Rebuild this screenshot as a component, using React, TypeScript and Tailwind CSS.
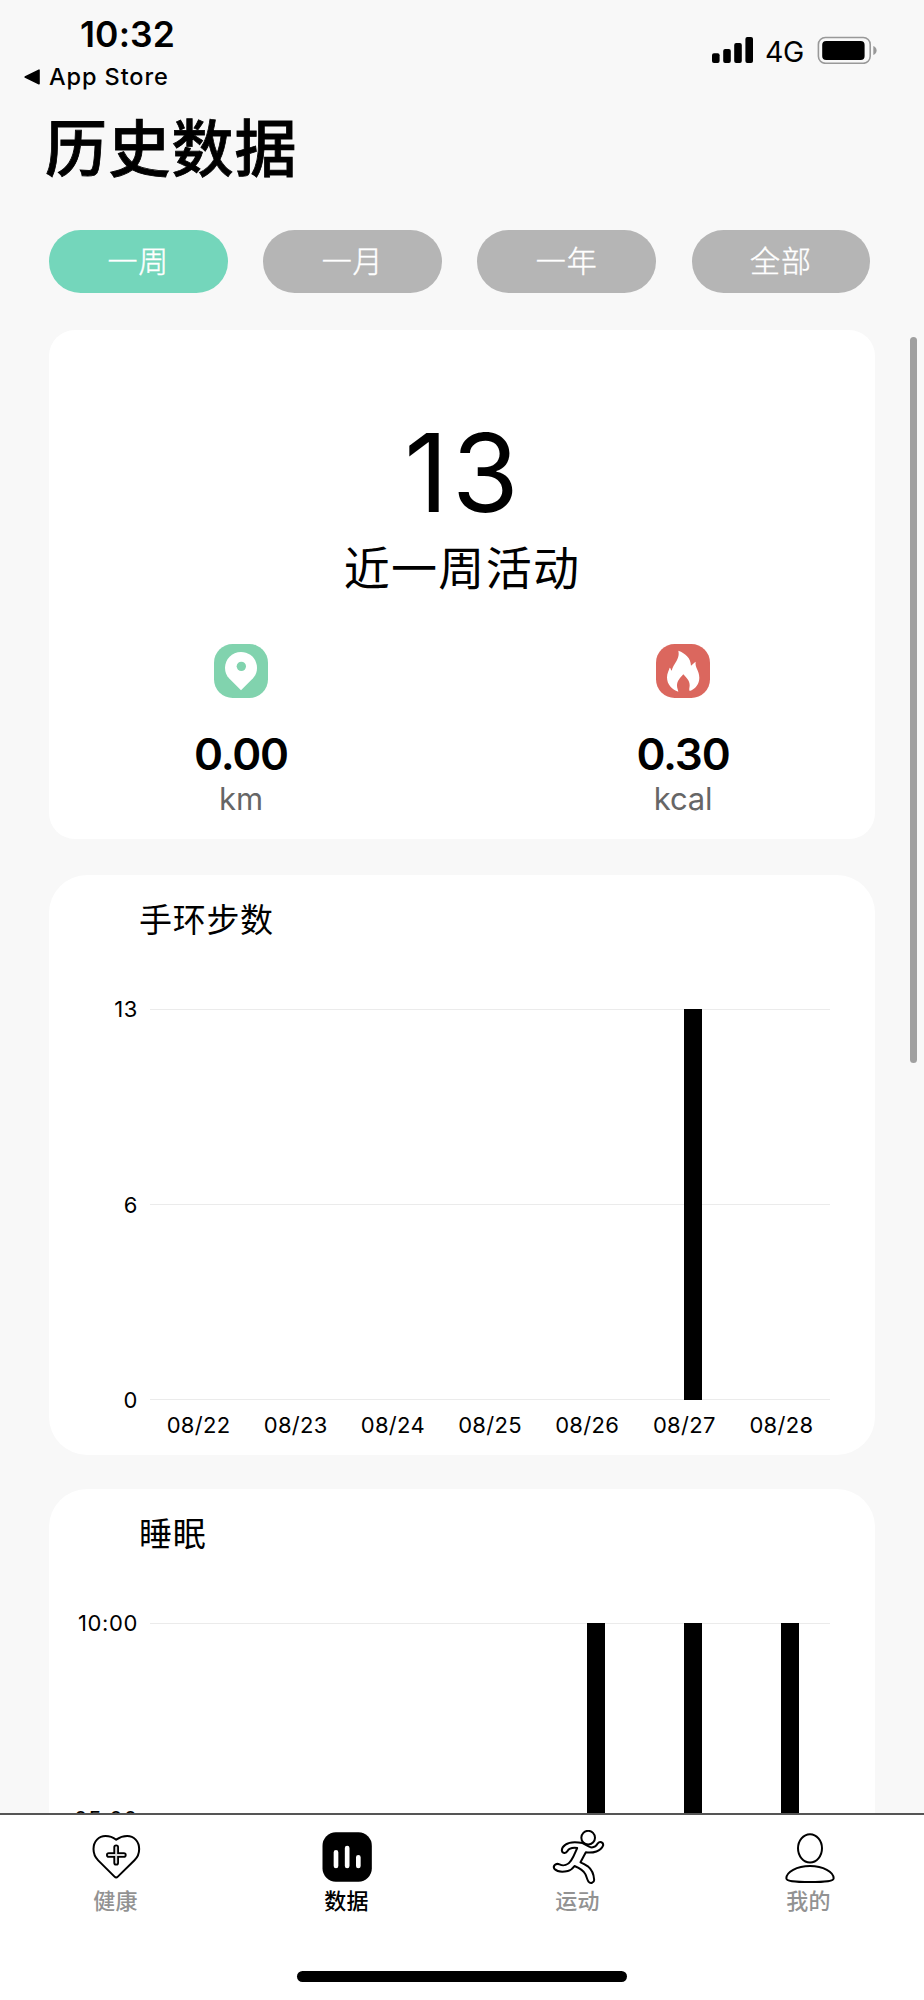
import React from "react";

const ranges = ["一周", "一月", "一年", "全部"];
const days = ["08/22", "08/23", "08/24", "08/25", "08/26", "08/27", "08/28"];

function StatusBar() {
  return (
    <header className="flex h-[100px] justify-between">
      <div className="flex flex-col">
        <div className="mt-[12px] ml-[80px] h-[46px] text-[35.5px] leading-[46px] font-semibold tracking-[0.1px]">10:32</div>
        <div className="mt-[3px] ml-[24px] flex h-[32px] items-center gap-[9px]">
          <svg className="h-[16px] w-[16px]" viewBox="0 0 16 16">
            <path d="M15 1.2v13.6L1.2 8z" stroke="#000" strokeWidth="1.6" strokeLinejoin="round" />
          </svg>
          <span className="text-[23.5px] leading-[32px] font-medium tracking-[0.9px]">App Store</span>
        </div>
      </div>
      <div className="mt-[36px] mr-[47px] flex h-[28px] items-center">
        <svg className="h-[28px] w-[42px]" viewBox="0 0 42 28">
          <rect x="0" y="17.3" width="7.6" height="9.7" rx="2" />
          <rect x="11.2" y="13" width="7.6" height="14" rx="2" />
          <rect x="22.2" y="7" width="7.6" height="20" rx="2" />
          <rect x="33.4" y="1" width="7.6" height="26" rx="2" />
        </svg>
        <span className="mt-[3px] ml-[11px] w-[42px] text-[28.5px] leading-[28px] tracking-[-0.3px]">4G</span>
        <svg className="ml-[10px] h-[28px] w-[60px]" viewBox="0 0 60 28">
          <rect x="1.4" y="1.5" width="51.8" height="25.800" rx="7" fill="none" stroke="#999" strokeWidth="1.6" />
          <rect x="5.2" y="5.1" width="42.4" height="18.800" rx="4" />
          <path d="M56.300 10c2 .8 3.300 2.600 3.300 4.500s-1.300 3.700-3.300 4.500z" fill="#999" />
        </svg>
      </div>
    </header>
  );
}

function PinIcon() {
  return (
    <svg className="h-[54px] w-[54px]" viewBox="42 42 162 162">
      <rect x="42" y="42" width="162" height="162" rx="56" fill="#81d3ae" />
      <path d="M123 66c-27 0-48 21-48 48 0 13 5 23 12 31l36 36 36-36c7-8 12-18 12-31 0-27-21-48-48-48z" fill="#fff" />
      <circle cx="124" cy="109" r="14" fill="#81d3ae" />
    </svg>
  );
}

function FlameIcon() {
  return (
    <svg className="h-[54px] w-[54px]" viewBox="48 42 162 162">
      <rect x="48" y="42" width="162" height="162" rx="56" fill="#db675e" />
      <path
        d="M115 62C137 70 152 84 153 107C158 104 161 98 167 95C164 112 178 122 178 143C178 162 166 177 149 183C146 178 149 173 149 166C149 152 139 143 130 133C121 143 111 153 111 167C111 174 114 178 115 185C95 179 81 163 81 142C81 130 87 121 89 113C93 115 92 119 95 122C97 112 104 103 109 94C114 84 118 76 115 62Z"
        fill="#fff"
      />
    </svg>
  );
}

function Metric({ icon, value, unit }: { icon: React.ReactNode; value: string; unit: string }) {
  return (
    <div className="flex w-[384px] flex-col items-center">
      {icon}
      <div className="mt-[29px] h-[54px] text-[44px] leading-[54px] font-semibold tracking-[-1.2px]">{value}</div>
      <div className="h-[36px] text-[31px] leading-[36px] tracking-[-0.2px] text-[#666]">{unit}</div>
    </div>
  );
}

type ChartProps = { title: string; ticks: string[]; bars: boolean[]; labels?: string[] };

function ChartCard({ title, ticks, bars, labels = [] }: ChartProps) {
  return (
    <section className="flex h-[580px] shrink-0 flex-col rounded-[38px] bg-white">
      <h2 className="mt-[20px] ml-[90px] h-[50px] text-[33px] leading-[50px] tracking-[0.7px]">{title}</h2>
      <div className="mt-[64px] flex h-[391px]">
        <div className="-my-[15px] flex w-[89px] flex-col justify-between text-right text-[22px] leading-[30px] tracking-[0.6px]">
          {ticks.map((t, i) => (
            <span key={i} className="h-[30px]">
              {t}
            </span>
          ))}
        </div>
        <div className="relative ml-[12px] flex w-[680px]">
          <div className="absolute inset-0 flex flex-col justify-between">
            <div className="h-px bg-[#ebebeb]" />
            <div className="h-px bg-[#ebebeb]" />
            <div className="h-px bg-[#ebebeb]" />
          </div>
          {bars.map((on, i) => (
            <div key={i} className="relative flex flex-1">
              {on && <div className="ml-[48.5px] h-full w-[18px] bg-black" />}
            </div>
          ))}
        </div>
      </div>
      <div className="mt-[10px] ml-[101px] flex w-[680px] text-center text-[22px] leading-[30px] tracking-[0.3px]">
        {labels.map((d) => (
          <span key={d} className="flex-1">
            {d}
          </span>
        ))}
      </div>
    </section>
  );
}

function HealthIcon() {
  return (
    <svg className="h-[55px] w-[54px]" viewBox="86.5 75 162 165" fill="none" stroke="#000" strokeLinejoin="round">
      <path
        d="M168 104c-9-7-20-11-32-11-20 0-36 16-36 39 0 14 5 25 14 34l49 49q5 5 10 0l50-49c9-9 14-20 14-34 0-23-16-39-36-39-12 0-23 4-33 11z"
        strokeWidth="6"
      />
      <path d="M168 127v46M146 150h45" strokeWidth="17" strokeLinecap="round" />
      <path d="M168 127v46M146 150h45" stroke="#ddd" strokeWidth="6" strokeLinecap="round" />
    </svg>
  );
}

function DataIcon() {
  return (
    <svg className="h-[55px] w-[54px]" viewBox="778.5 75 162 165">
      <rect x="786" y="82" width="148" height="148" rx="40" />
      <path d="M826.500 142v41M860 129v54M893.500 157v26" stroke="#fff" strokeWidth="14" strokeLinecap="round" />
    </svg>
  );
}

function SportIcon() {
  return (
    <svg className="h-[55px] w-[54px]" viewBox="91.5 75 162 165" fill="none" stroke="#000" strokeWidth="6" strokeLinejoin="round">
      <circle cx="203" cy="98" r="20.500" />
      <path d="M186 114C166 110 147 110 135 119C128 124 124 130 124 136C125 145 136 147 141 138C145 131 154 127 170 129C164 143 160 154 152 166C143 180 129 184 117 178C105 173 96 184 102 192C110 200 128 201 142 198C151 196 157 190 162 183C176 189 189 195 195 208C199 217 200 224 204 230C210 237 221 233 221 225C220 208 212 192 202 184C195 179 188 175 180 172L196 142C218 145 241 139 248 121C249 112 238 107 232 115C227 124 219 128 211 127C201 124 195 118 186 114Z" />
    </svg>
  );
}

function ProfileIcon() {
  return (
    <svg className="h-[55px] w-[54px]" viewBox="785 75 162 165" fill="none" stroke="#000" strokeWidth="6">
      <ellipse cx="869" cy="130" rx="36" ry="42.500" />
      <path d="M869 183c-40 0-71 18-71 37 0 8 21 11 71 11s71-3 71-11c0-19-31-37-71-37z" />
    </svg>
  );
}

const tabs = [
  { label: "健康", icon: <HealthIcon />, active: false },
  { label: "数据", icon: <DataIcon />, active: true },
  { label: "运动", icon: <SportIcon />, active: false },
  { label: "我的", icon: <ProfileIcon />, active: false },
];

export default function App() {
  return (
    <div className="relative flex h-[2000px] w-[924px] flex-col overflow-hidden bg-[#f8f8f8] font-['Inter','Noto_Sans_CJK_SC',sans-serif] text-black">
      <StatusBar />
      <h1 className="ml-[45px] h-[96px] pt-[4px] text-[62px] leading-[92px] font-medium tracking-[1.200px] [-webkit-text-stroke:0.8px_black]">
        历史数据
      </h1>
      <nav className="mt-[34px] ml-[49px] flex gap-[35.5px]">
        {ranges.map((r, i) => (
          <button
            key={r}
            className={
              "h-[63px] w-[178.7px] rounded-full text-[30px] font-light tracking-[0.9px] text-white [-webkit-text-stroke:0.4px_white] " +
              (i === 0 ? "bg-[#74d6bb]" : "bg-[#b5b5b5]")
            }
          >
            {r}
          </button>
        ))}
      </nav>
      <main className="mt-[37px] flex h-[1483px] flex-col overflow-hidden px-[49px]">
        <section className="flex h-[509px] shrink-0 flex-col rounded-[26px] bg-white">
          <div className="mt-[78px] h-[130px] pl-[3px] text-center text-[108px] leading-[130px] tracking-[4px]">13</div>
          <div className="-mt-[2px] h-[64px] text-center text-[46px] leading-[64px] tracking-[1.3px]">近一周活动</div>
          <div className="mt-[44px] flex justify-between">
            <Metric icon={<PinIcon />} value="0.00" unit="km" />
            <Metric icon={<FlameIcon />} value="0.30" unit="kcal" />
          </div>
        </section>
        <div className="mt-[36px] flex flex-col gap-[34px]">
          <ChartCard
            title="手环步数"
            ticks={["13", "6", "0"]}
            bars={[false, false, false, false, false, true, false]}
            labels={days}
          />
          <ChartCard title="睡眠" ticks={["10:00", "05:00", ""]} bars={[false, false, false, false, true, true, true]} />
        </div>
      </main>
      <footer className="flex h-[187px] flex-col items-center border-t-2 border-[#555] bg-white">
        <div className="flex w-full pt-[15px]">
          {tabs.map((t) => (
            <div key={t.label} className="flex flex-1 flex-col items-center">
              {t.icon}
              <span
                className={
                  "mt-px h-[30px] text-[22px] leading-[30px] font-medium tracking-[0.3px] " +
                  (t.active ? "text-black" : "text-[#929292]")
                }
              >
                {t.label}
              </span>
            </div>
          ))}
        </div>
        <div className="mt-[55px] h-[11px] w-[330px] rounded-full bg-black" />
      </footer>
      <div className="absolute top-[337px] left-[910px] h-[726px] w-[7px] rounded-full bg-[#a0a0a0]" />
    </div>
  );
}
